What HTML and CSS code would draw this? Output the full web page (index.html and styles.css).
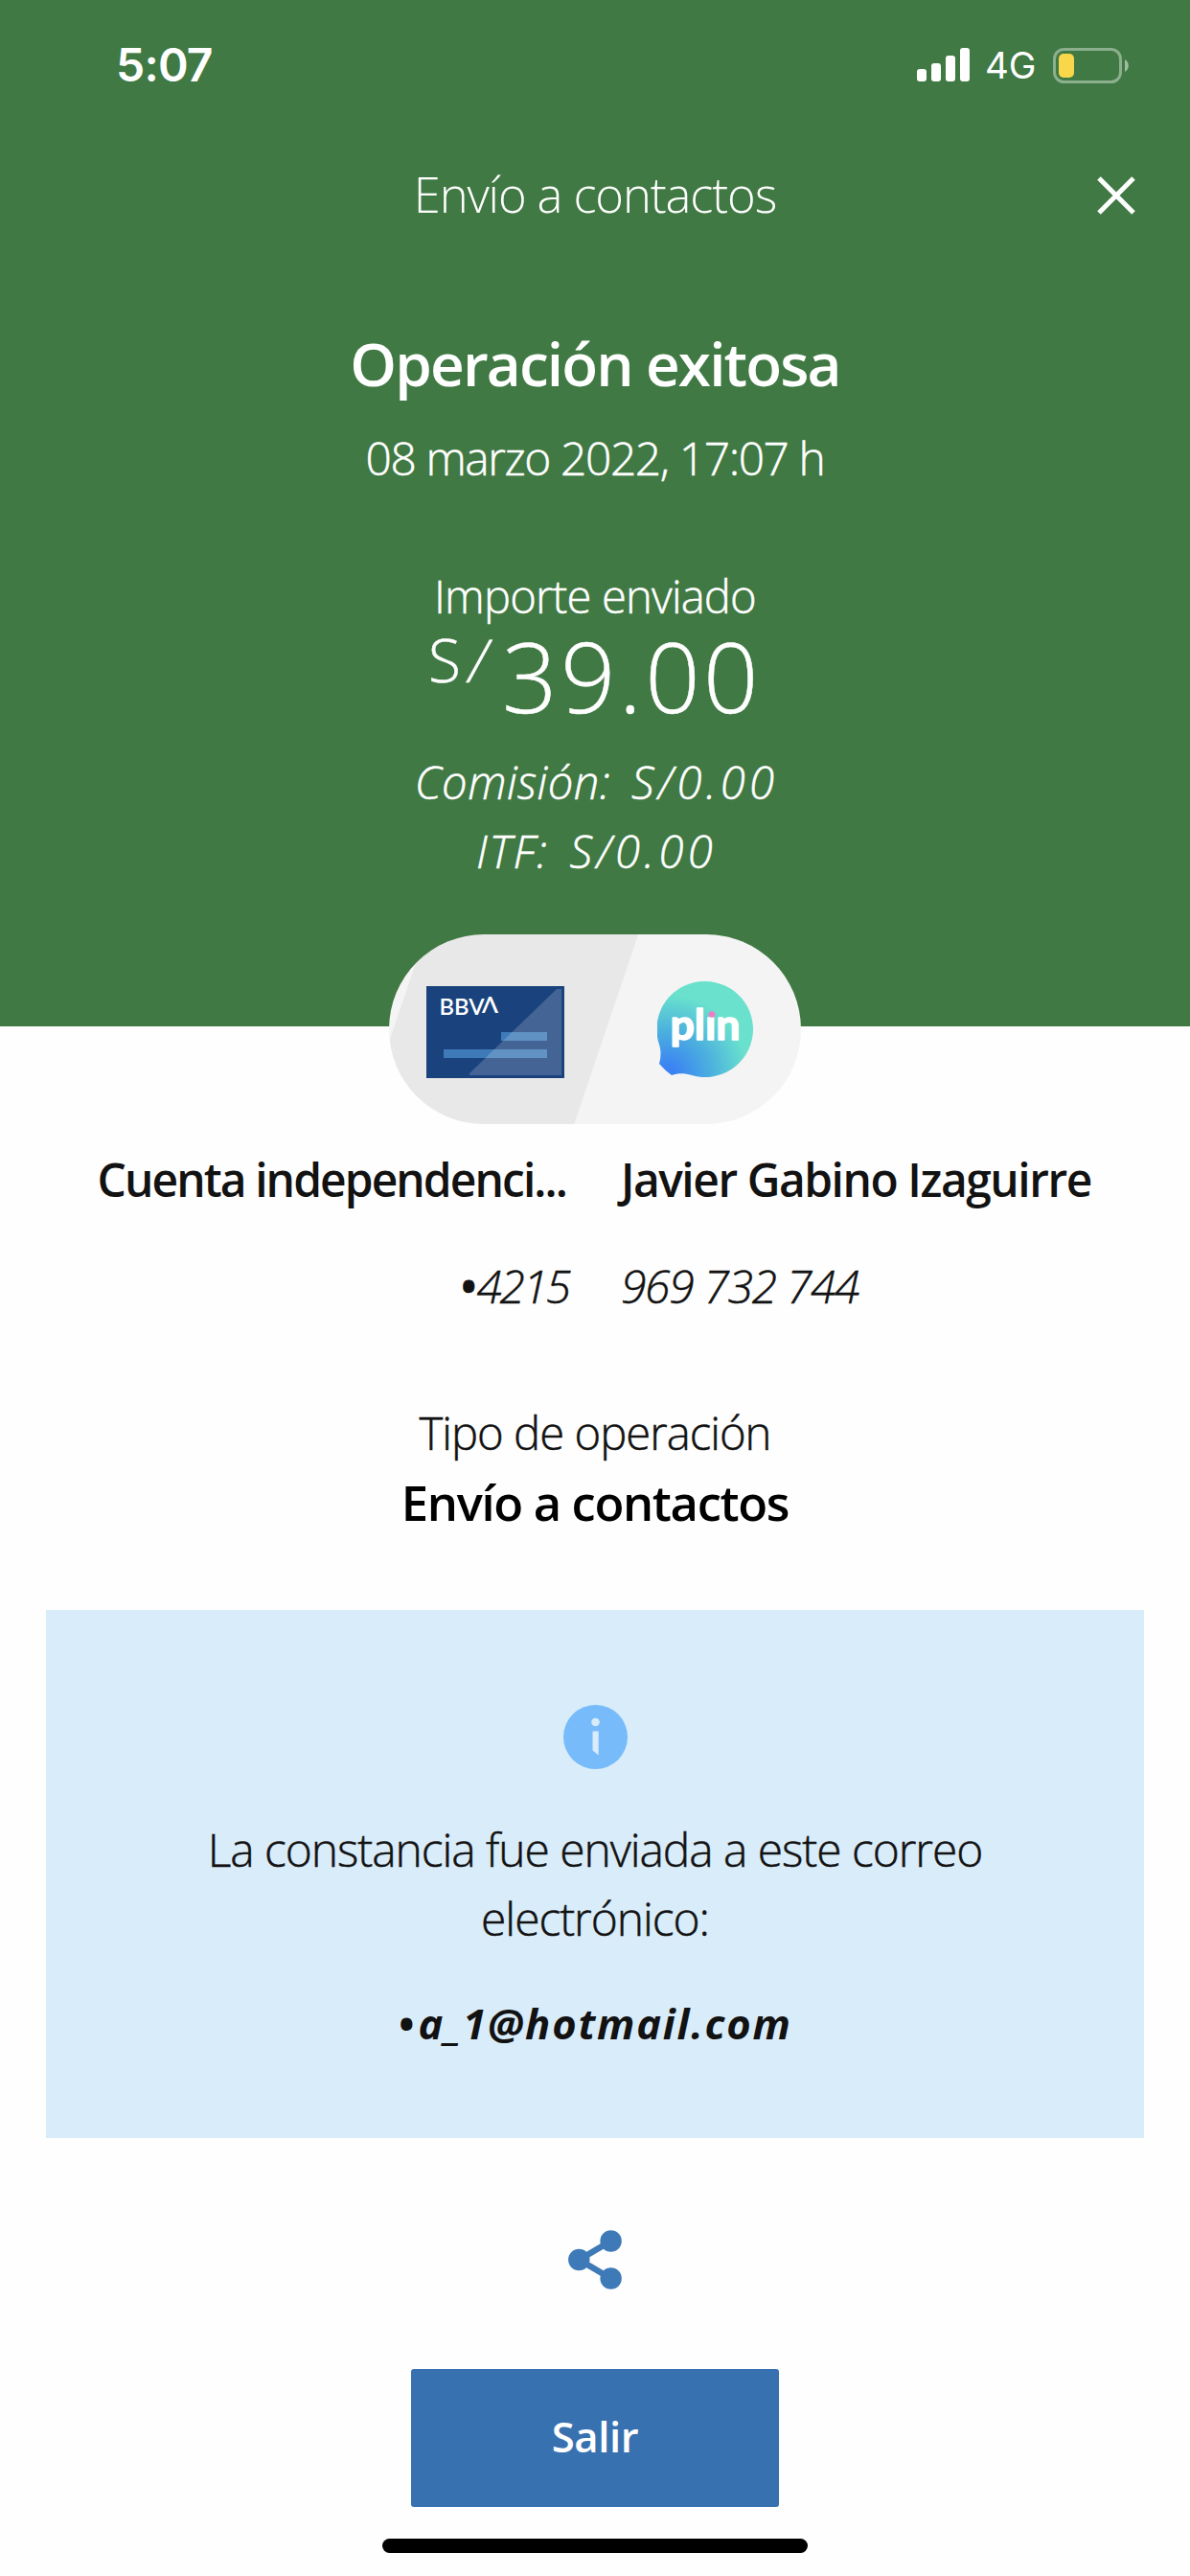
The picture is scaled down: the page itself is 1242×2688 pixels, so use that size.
FILE: index.html
```html
<!DOCTYPE html>
<html lang="es">
<head>
<meta charset="utf-8">
<title>Envío a contactos</title>
<link rel="stylesheet" href="styles.css">
</head>
<body>
<div class="screen">
  <header class="hero">
    <div class="status">
      <span class="time">5:07</span>
      <div class="status-right">
        <svg class="signal" width="55" height="36" viewBox="0 0 55 36" fill="#fff">
          <rect x="0" y="22" width="10" height="13" rx="3"/>
          <rect x="15" y="16" width="10" height="19" rx="3"/>
          <rect x="30" y="8" width="10" height="27" rx="3"/>
          <rect x="45" y="0" width="10" height="35" rx="3"/>
        </svg>
        <span class="network">4G</span>
        <svg class="battery" width="80" height="37" viewBox="0 0 80 37">
          <rect x="1.5" y="1.5" width="69" height="34" rx="10" fill="none" stroke="#8caf8e" stroke-width="3"/>
          <rect x="6" y="6" width="16" height="25" rx="5" fill="#f8d74a"/>
          <path d="M75 12c5 2.500 5 10.500 0 13z" fill="#a0bda1"/>
        </svg>
      </div>
    </div>
    <div class="nav">
      <h1 class="nav-title">Envío a contactos</h1>
      <svg class="close" width="40" height="40" viewBox="0 0 40 40" stroke="#fff" stroke-width="5"><path d="M2 2l36 36M38 2L2 38"/></svg>
    </div>
    <h2 class="result">Operación exitosa</h2>
    <p class="date">08 marzo 2022, 17:07 h</p>
    <p class="amount-label">Importe enviado</p>
    <p class="amount"><span class="currency">S<span class="slash">/</span></span><span class="value">39.00</span></p>
    <p class="fee"><span class="fee-label">Comisión:</span><span class="fee-value">S/0.00</span></p>
    <p class="fee"><span class="fee-label itf">ITF:</span><span class="fee-value">S/0.00</span></p>
  </header>

  <div class="pill">
    <svg class="card" width="144" height="96" viewBox="0 0 144 96">
      <rect width="144" height="96" fill="#1a437d"/>
      <path d="M78 48h48v9H78zM18 66h108v9H18z" fill="#3f7ab8"/>
      <path d="M136 3h5v90H45v-2z" fill="#fff" fill-opacity=".18"/>
      <text class="bbva" x="13.500" y="29.500" textLength="47" lengthAdjust="spacingAndGlyphs">BBV</text>
      <text class="bbva" x="58" y="28" textLength="17" lengthAdjust="spacingAndGlyphs">Λ</text>
    </svg>
    <svg class="plin" width="100" height="100" viewBox="0 0 100 100">
      <defs>
        <radialGradient id="bubble" gradientUnits="userSpaceOnUse" cx="10" cy="98" r="84">
          <stop offset="0" stop-color="#3b7ff5"/>
          <stop offset=".12" stop-color="#3b84f3"/>
          <stop offset=".55" stop-color="#4cb0de"/>
          <stop offset="1" stop-color="#69e1cd"/>
        </radialGradient>
      </defs>
      <path d="M50 0a50 50 0 1 1-14 98c-8-2.500-15-2-21 0Q8 93 2 86c2-7 2-14 0-20A50 50 0 0 1 50 0z" fill="url(#bubble)"/>
      <text class="plin-name" x="13.500" y="61" textLength="73" lengthAdjust="spacingAndGlyphs">plın</text>
      <circle cx="57" cy="34.500" r="3.300" fill="#f07cc6"/>
    </svg>
  </div>

  <section class="parties">
    <div class="from">
      <p class="name from-name">Cuenta independenci...</p>
      <p class="number short"><span class="dot">•</span>4215</p>
    </div>
    <div class="to">
      <p class="name to-name">Javier Gabino Izaguirre</p>
      <p class="number">969 732 744</p>
    </div>
  </section>

  <section class="operation">
    <p class="op-label">Tipo de operación</p>
    <p class="op-name">Envío a contactos</p>
  </section>

  <section class="notice">
    <svg class="info" width="67" height="67" viewBox="0 0 67 67">
      <circle cx="33.500" cy="33.500" r="33.500" fill="#77bbfa"/>
      <circle cx="33.500" cy="18" r="4.300" fill="#d9ecfa"/>
      <path d="M30.500 27.500h6.200V52.500l-6.200-5z" fill="#d9ecfa"/>
    </svg>
    <p class="notice-text">La constancia fue enviada a este correo electrónico:</p>
    <p class="email"><span class="email-dot">•</span>a_1@hotmail.com</p>
  </section>

  <svg class="share" width="56" height="62" viewBox="0 0 56 62" fill="#3f7ab8">
    <path d="M44.500 11.500L11.500 31l33 19.500" fill="none" stroke="#3f7ab8" stroke-width="6.500"/>
    <circle cx="11.300" cy="31" r="11.200"/>
    <circle cx="44.600" cy="11.500" r="11.200"/>
    <circle cx="44.600" cy="50.500" r="11.200"/>
  </svg>
  <button class="exit">Salir</button>
  <div class="home"></div>
</div>
</body>
</html>
```
FILE: styles.css
```css
* { box-sizing: border-box; }
body, h1, h2, p { margin: 0; }
body { background: #fff; }

.screen {
  width: 1242px;
  height: 2688px;
  display: flex;
  flex-direction: column;
  align-items: center;
  font-family: "Open Sans", sans-serif;
  font-weight: 300;
  font-size: 47.9px;
  line-height: 60px;
  color: #121212;
  background: #fefefe;
  white-space: nowrap;
}

.date, .amount-label, .amount, .fee, .number, .op-label, .notice-text {
  -webkit-text-stroke: 0.5px currentColor;
}

.hero {
  width: 100%;
  height: 1071px;
  display: flex;
  flex-direction: column;
  align-items: center;
  color: #fff;
  background: #407943;
}

.status {
  width: 100%;
  height: 136px;
  padding: 0 63px 0 121px;
  display: flex;
  justify-content: space-between;
  align-items: center;
  font-family: Inter, sans-serif;
}
.time { font-size: 48px; font-weight: 600; letter-spacing: -0.8px; }
.status-right { display: flex; align-items: center; }
.network { margin-left: 16px; font-size: 38.500px; font-weight: 400; width: 69px; }
.battery { margin-left: 2px; }

.nav {
  width: 100%;
  margin-top: 37px;
  display: grid;
  grid-template-columns: 1fr auto 1fr;
  align-items: center;
}
.nav-title {
  grid-column: 2;
  font-size: 50.7px;
  font-weight: 300;
  letter-spacing: -1.12px;
}
.close { justify-self: end; margin: 2px 57px 0 0; }

.result {
  margin-top: 108px;
  font-size: 62px;
  line-height: 76px;
  font-weight: 600;
  letter-spacing: -1.86px;
}
.date { margin-top: 31px; letter-spacing: -1.39px; }
.amount-label { margin-top: 84px; font-size: 47.2px; letter-spacing: -0.84px; }
.amount { display: flex; align-items: flex-start; margin-top: -2px; }
.currency { width: 77px; font-size: 62px; line-height: 76px; }
.slash { display: inline-block; margin-left: 9px; transform: skewX(-10deg); }
.value { font-size: 100.7px; line-height: 110px; letter-spacing: 3.4px; }
.fee {
  margin-top: 20px;
  padding-left: 3px;
  display: flex;
  gap: 22px;
  font-size: 47.2px;
  line-height: 72px;
  font-style: italic;
}
.fee + .fee { margin-top: 0; }
.fee-label { letter-spacing: 0.44px; }
.itf { letter-spacing: 1.78px; }
.fee-value { letter-spacing: 4.3px; }

.pill {
  width: 430px;
  height: 198px;
  margin-top: -96px;
  padding: 0 50px 0 39px;
  display: flex;
  justify-content: space-between;
  align-items: center;
  border-radius: 99px;
  background: linear-gradient(108.700deg, #f4f4f4 35.500px, #e8e8e8 36.500px, #e8e8e8 246px, #f4f4f4 247px);
}
.card { margin-top: 6px; }
.bbva { font: 600 22px Lato, sans-serif; fill: #fff; }
.plin-name {
  font: 700 43px Lato, sans-serif;
  fill: #fff;
  stroke: #fff;
  stroke-width: 1.5px;
  stroke-linejoin: round;
}

.parties {
  width: 100%;
  margin-top: 28px;
  display: grid;
  grid-template-columns: 594px 1fr;
  column-gap: 54px;
}
.from { text-align: right; }
.name { font-weight: 600; }
.from-name { letter-spacing: -1.9px; margin-right: 3px; }
.to-name { letter-spacing: -1.45px; }
.number { margin-top: 51px; font-style: italic; letter-spacing: -1.26px; }
.short { letter-spacing: -2.2px; }
.dot { font-weight: 600; letter-spacing: 0; }

.operation { margin-top: 87px; text-align: center; line-height: 72px; }
.op-label { font-size: 47.2px; letter-spacing: -0.96px; }
.op-name { margin-top: 1px; font-size: 50.7px; font-weight: 600; letter-spacing: -1.33px; color: #000; }

.notice {
  width: 1146px;
  height: 551px;
  margin-top: 76px;
  padding-top: 99px;
  display: flex;
  flex-direction: column;
  align-items: center;
  text-align: center;
  line-height: 72px;
  background: #d9ecfa;
}
.notice-text { width: 850px; margin-top: 48px; white-space: normal; letter-spacing: -1.04px; }
.email { margin-top: 38px; font-size: 43.5px; font-weight: 700; font-style: italic; letter-spacing: 1.8px; }
.email-dot { margin-right: 3px; }

.share { margin-top: 96px; }
.exit {
  width: 384px;
  height: 144px;
  margin-top: 83px;
  padding: 0 0 4px;
  border: 0;
  border-radius: 3px;
  background: #3871b0;
  color: #fff;
  font: 600 43.7px "Open Sans", sans-serif;
  letter-spacing: -0.4px;
}
.home { width: 444px; height: 15px; margin-top: 33px; border-radius: 8px; background: #000; }
```
